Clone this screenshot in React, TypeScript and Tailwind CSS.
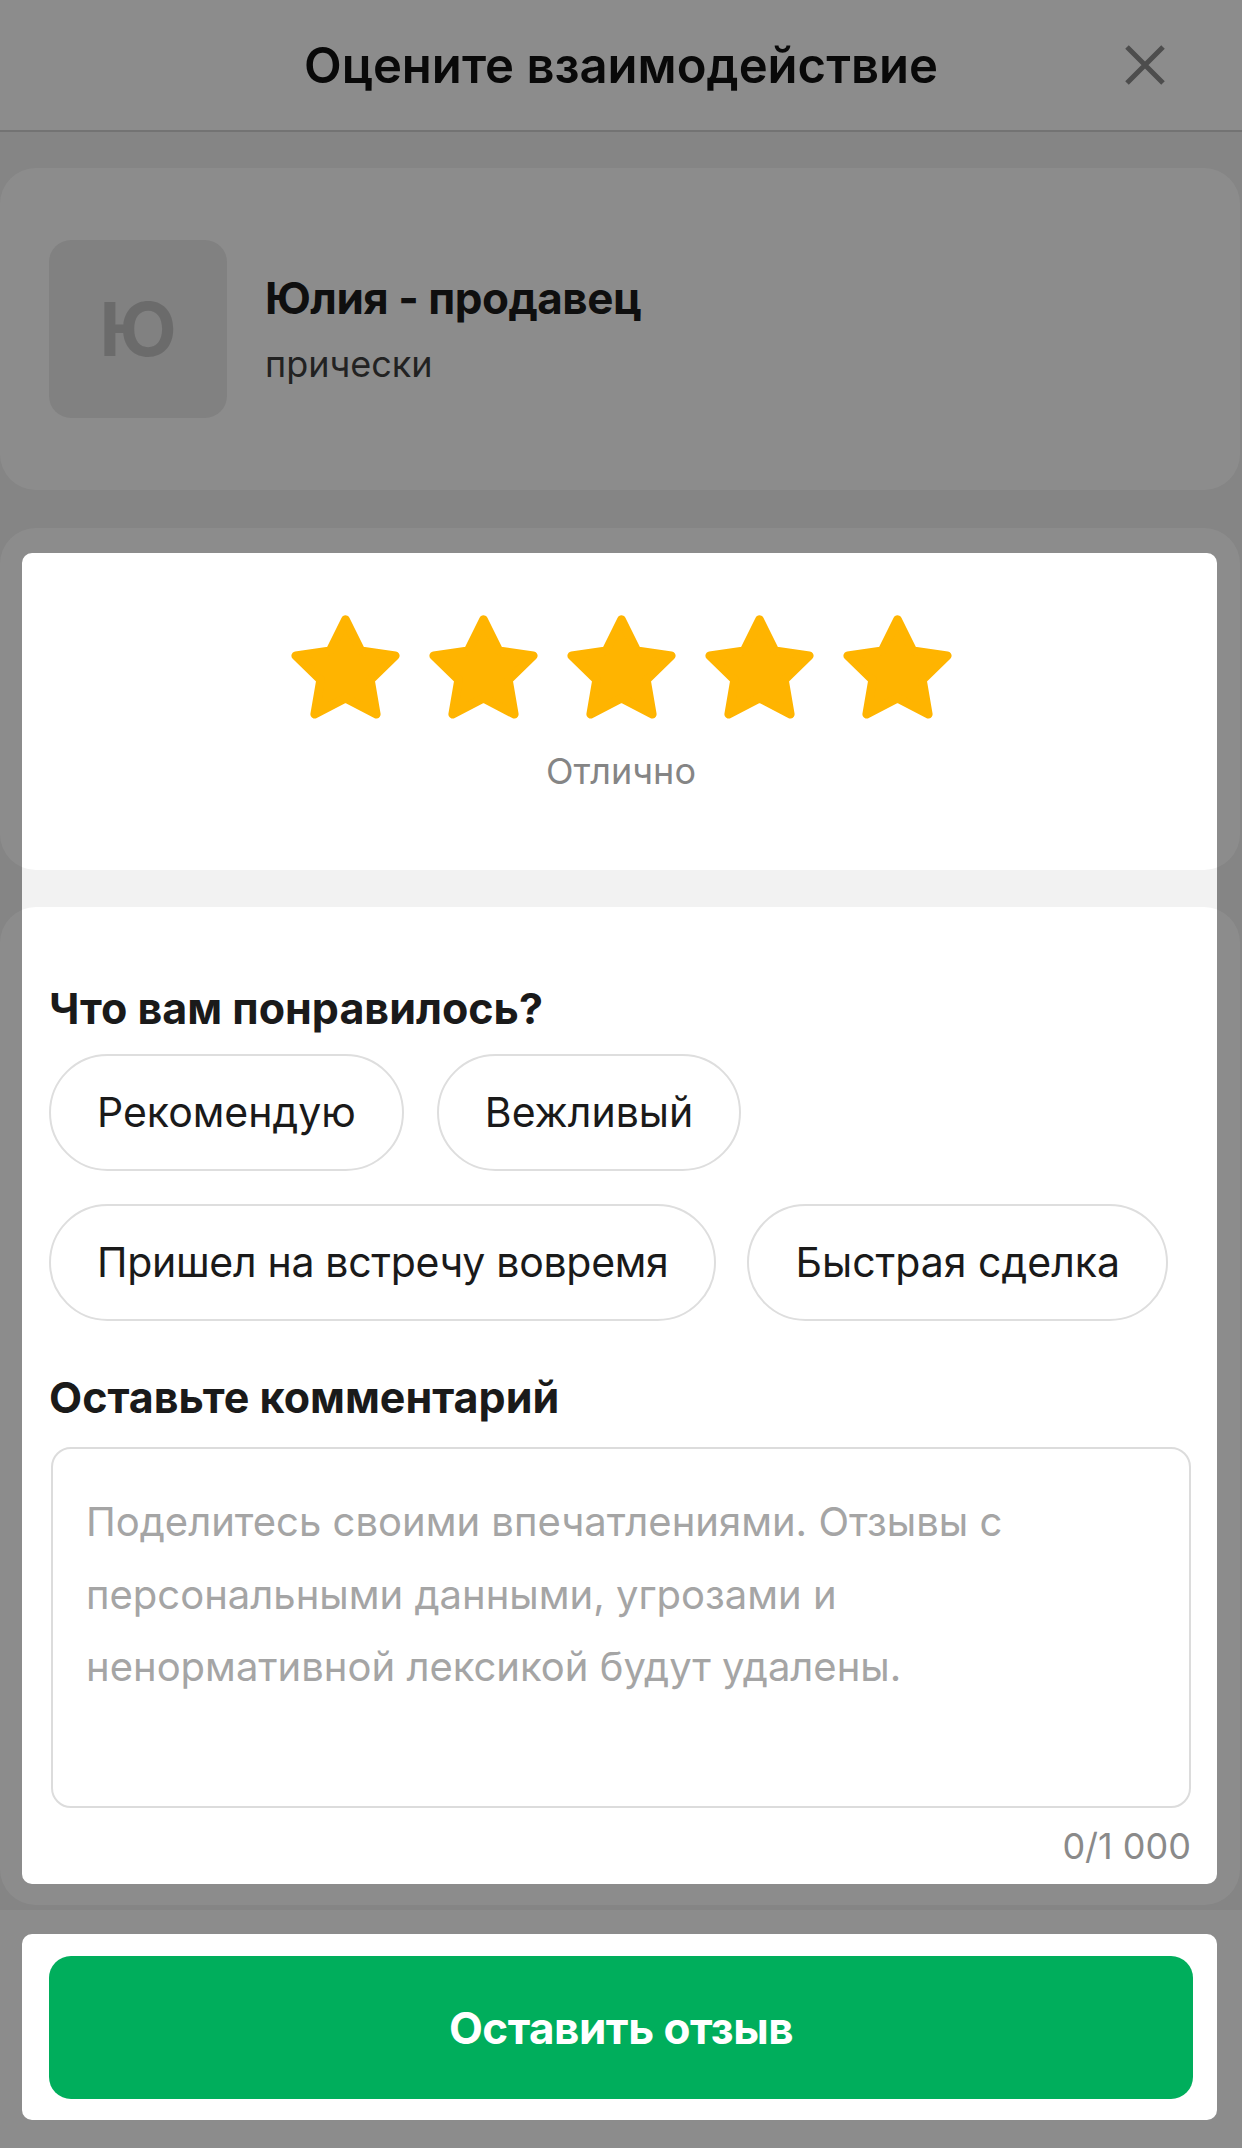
import React from "react";

const Star = () => (
  <svg width="109" height="104" viewBox="0 0 100 95">
    <polygon
      points="50,4 64.1,32.6 95.65,37.17 72.83,59.42 78.21,90.83 50,76 21.79,90.83 27.17,59.42 4.35,37.17 35.9,32.6"
      fill="#FFB400"
      stroke="#FFB400"
      strokeWidth="8"
      strokeLinejoin="round"
    />
  </svg>
);

const Chip = ({ label, tight }: { label: string; tight?: boolean }) => (
  <div
    className={`h-[117px] px-[46px] flex items-center rounded-full border-2 border-[#dedede] text-[41px] leading-none text-[#1a1a1a] ${
      tight ? "tracking-[-0.3px]" : ""
    }`}
  >
    {label}
  </div>
);

// dim layer over the page with two cut-out windows
const Spotlight = () => (
  <svg className="absolute inset-0 pointer-events-none" width="1242" height="2148" viewBox="0 0 1242 2148">
    <path
      fillRule="evenodd"
      fill="rgba(0,0,0,0.45)"
      d="M0 0H1242V2148H0Z M32 553H1207A10 10 0 0 1 1217 563V1874A10 10 0 0 1 1207 1884H32A10 10 0 0 1 22 1874V563A10 10 0 0 1 32 553Z M32 1934H1207A10 10 0 0 1 1217 1944V2110A10 10 0 0 1 1207 2120H32A10 10 0 0 1 22 2110V1944A10 10 0 0 1 32 1934Z"
    />
  </svg>
);

export default function App() {
  return (
    <div className="relative w-[1242px] h-[2148px] overflow-hidden bg-[#f2f2f2] flex flex-col font-['Inter',sans-serif]">
      {/* header */}
      <div className="h-[132px] shrink-0 bg-white border-b-2 border-[#d1d1d1] grid grid-cols-[1fr_auto_1fr] items-center">
        <div />
        <h1 className="text-[49px] leading-none font-semibold text-[#111]">Оцените взаимодействие</h1>
        <div className="flex justify-end pr-[76px]">
          <svg width="42" height="42" viewBox="0 0 42 42">
            <path d="M3 3L39 39M39 3L3 39" stroke="#8c8c8c" strokeWidth="5" strokeLinecap="butt" />
          </svg>
        </div>
      </div>

      {/* seller */}
      <div className="mt-[36px] w-[1240px] h-[322px] shrink-0 bg-white rounded-[36px] flex items-center pl-[49px] gap-[38px]">
        <div className="w-[178px] h-[178px] rounded-[22px] bg-[#ebebeb] flex items-center justify-center text-[74px] font-bold text-[#c4c4c4] leading-none">
          Ю
        </div>
        <div className="flex flex-col">
          <div className="text-[44px] leading-none font-bold text-[#1c1c1c] tracking-[-0.5px]">Юлия - продавец</div>
          <div className="mt-[26px] text-[36px] leading-none text-[#3f3f3f]">прически</div>
        </div>
      </div>

      {/* rating */}
      <div className="mt-[38px] w-[1240px] h-[342px] shrink-0 bg-white rounded-[36px] flex flex-col items-center pt-[87px] pl-[2px]">
        <div className="flex gap-[29px]">
          <Star />
          <Star />
          <Star />
          <Star />
          <Star />
        </div>
        <div className="mt-[34px] text-[36px] leading-none text-[#858585]">Отлично</div>
      </div>

      {/* feedback */}
      <div className="mt-[37px] w-[1240px] h-[998px] shrink-0 bg-white rounded-[36px] px-[49px] pt-[80px] flex flex-col">
        <div className="text-[43px] leading-none font-bold text-[#1a1a1a]">Что вам понравилось?</div>
        <div className="mt-[24px] flex gap-[33px]">
          <Chip label="Рекомендую" />
          <Chip label="Вежливый" />
        </div>
        <div className="mt-[33px] flex gap-[31px]">
          <Chip label="Пришел на встречу вовремя" tight />
          <Chip label="Быстрая сделка" />
        </div>
        <div className="mt-[55px] text-[43px] leading-none font-bold text-[#1a1a1a]">Оставьте комментарий</div>
        <div className="mt-[28px] ml-[2px] h-[361px] rounded-[20px] border-2 border-[#dcdcdc] pl-[33px] pr-[30px] pt-[37px] text-[40px] leading-[72.6px] text-[#a5a5a5]">
          Поделитесь своими впечатлениями. Отзывы с<br />
          персональными данными, угрозами и<br />
          ненормативной лексикой будут удалены.
        </div>
        <div className="mt-[20px] self-end text-[36px] leading-none text-[#8a8a8a]">0/1 000</div>
      </div>

      {/* bottom bar */}
      <div className="mt-[5px] flex-1 bg-white pt-[46px] px-[49px]">
        <button className="w-full h-[143px] rounded-[22px] bg-[#00AE5C] flex items-center justify-center text-[44px] leading-none font-bold text-white tracking-[-0.5px]">
          Оставить отзыв
        </button>
      </div>

      <Spotlight />
    </div>
  );
}
